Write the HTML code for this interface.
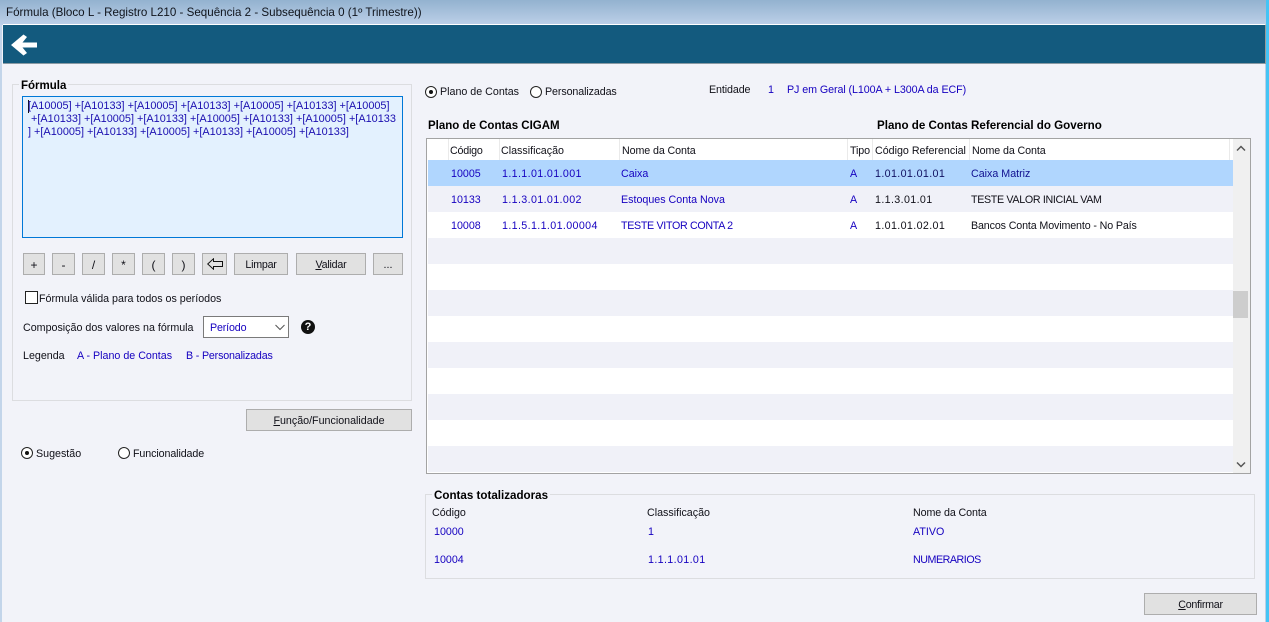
<!DOCTYPE html>
<html lang="pt"><head><meta charset="utf-8"><title>Fórmula</title>
<style>
html,body{margin:0;padding:0;width:1269px;height:622px;overflow:hidden;background:#f2f3f9}
body{position:relative;font:10.7px/14px "Liberation Sans",sans-serif;color:#000}
.a,.t,.b{position:absolute}
.t{white-space:nowrap;color:#101018;margin-top:1px}
.l{color:#1500c0}
.n{letter-spacing:.37px}
.h{font-weight:bold;color:#000;font-size:11.5px}
.b{box-sizing:border-box;background:#e1e1e1;border:1px solid #adadad;text-align:center;line-height:22px;color:#101018}
.r{position:absolute;box-sizing:border-box;width:12px;height:12px;border:1px solid #222;border-radius:50%;background:#fff}
.r.on:after{content:"";position:absolute;left:3px;top:3px;width:4px;height:4px;border-radius:50%;background:#111}
.g{position:absolute;box-sizing:border-box;border:1px solid #dcdde0}
.s{position:absolute;top:139px;width:1px;height:21px;background:#eaeaea}
.row{position:absolute;left:428px;width:805px;height:26px}
</style></head><body>
<div class="a" style="left:0;top:0;width:1269px;height:25px;background:linear-gradient(#93b2cf,#bdd0e9)"></div>
<div class="a" style="left:0;top:25px;width:2px;height:597px;background:#c3d5ea"></div>
<div class="a" style="left:1266px;top:0;width:3px;height:622px;background:#45c4f5"></div>
<div class="a" style="left:1265px;top:25px;width:1px;height:597px;background:#bcd0e6"></div>
<div class="t" style="left:6px;top:5px;color:#10141c;font-size:11.6px">Fórmula (Bloco L - Registro L210 - Sequência 2 - Subsequência 0 (1º Trimestre))</div>
<div class="a" style="left:3px;top:24px;width:1263px;height:40px;box-sizing:border-box;background:#135a7e;border-top:1px solid #fff;border-bottom:1px solid #8a9aa4;border-right:1px solid #999"></div>
<svg class="a" style="left:10px;top:33px" width="28" height="24" viewBox="0 0 28 24"><path d="M27 9.5H12.500L17 4 13.500 1.500 1 12l12.500 10.500 3.500-2.500-4.500-5.500H27z" fill="#fff"/></svg>

<div class="g" style="left:12px;top:84px;width:400px;height:317px"></div>
<div class="t h" style="left:19px;top:78px;background:#f2f3f9;padding:0 2px">Fórmula</div>
<div class="a" style="left:22px;top:96px;width:381px;height:142px;box-sizing:border-box;border:1px solid #0078d7;background:#e3f1fe"></div>
<div class="a" style="left:28px;top:100px;width:1px;height:13px;background:#111"></div>
<div class="t l" style="left:28px;top:99px;line-height:13px;font-size:10.9px;color:#1a0eb0">[A10005] +[A10133] +[A10005] +[A10133] +[A10005] +[A10133] +[A10005]<br>&nbsp;+[A10133] +[A10005] +[A10133] +[A10005] +[A10133] +[A10005] +[A10133<br>] +[A10005] +[A10133] +[A10005] +[A10133] +[A10005] +[A10133]</div>

<div class="b" style="left:23px;top:253px;width:22px;height:22px;font-size:12px">+</div>
<div class="b" style="left:52px;top:253px;width:23px;height:22px;font-size:12px">-</div>
<div class="b" style="left:82px;top:253px;width:23px;height:22px;font-size:12px">/</div>
<div class="b" style="left:112px;top:253px;width:23px;height:22px;font-size:12px">*</div>
<div class="b" style="left:142px;top:253px;width:23px;height:22px;font-size:12px">(</div>
<div class="b" style="left:172px;top:253px;width:23px;height:22px;font-size:12px">)</div>
<div class="b" style="left:202px;top:253px;width:25px;height:22px"><svg style="position:absolute;left:4px;top:4px" width="16" height="12" viewBox="0 0 16 12"><path d="M.7 6 6.500.8v2.700h9v5h-9v2.700z" fill="none" stroke="#111" stroke-width="1"/></svg></div>
<div class="b" style="left:234px;top:253px;width:54px;height:22px;letter-spacing:-.25px">Limpar</div>
<div class="b" style="left:296px;top:253px;width:70px;height:22px;letter-spacing:-.2px"><u>V</u>alidar</div>
<div class="b" style="left:373px;top:253px;width:30px;height:22px">...</div>

<div class="a" style="left:25px;top:291px;width:13px;height:13px;box-sizing:border-box;border:1px solid #222;background:#fff"></div>
<div class="t" style="left:39px;top:291px">Fórmula válida para todos os períodos</div>
<div class="t" style="left:23px;top:320px">Composição dos valores na fórmula</div>
<div class="a" style="left:203px;top:316px;width:86px;height:22px;box-sizing:border-box;border:1px solid #7a7a7a;background:#fff"></div>
<div class="t l" style="left:210px;top:320px;letter-spacing:-.15px">Período</div>
<svg class="a" style="left:275px;top:324px" width="10" height="7"><path d="M.5 1 5 5.500 9.500 1" fill="none" stroke="#555"/></svg>
<div class="a" style="left:301px;top:320px;width:14px;height:14px;border-radius:50%;background:#111;color:#fff;font:bold 11px/14px 'Liberation Sans',sans-serif;text-align:center">?</div>
<div class="t" style="left:23px;top:348px">Legenda</div>
<div class="t l" style="left:77px;top:348px">A - Plano de Contas</div>
<div class="t l" style="left:186px;top:348px;letter-spacing:-.17px">B - Personalizadas</div>

<div class="b" style="left:246px;top:409px;width:166px;height:22px"><u>F</u>unção/Funcionalidade</div>
<div class="r on" style="left:21px;top:447px"></div><div class="t" style="left:36px;top:446px">Sugestão</div>
<div class="r" style="left:118px;top:447px"></div><div class="t" style="left:133px;top:446px;letter-spacing:-.1px">Funcionalidade</div>

<div class="r on" style="left:425px;top:86px"></div><div class="t" style="left:440px;top:84px">Plano de Contas</div>
<div class="r" style="left:530px;top:86px"></div><div class="t" style="left:545px;top:84px;letter-spacing:-.1px">Personalizadas</div>
<div class="t" style="left:709px;top:82px;letter-spacing:-.1px">Entidade</div>
<div class="t l" style="left:768px;top:82px">1</div>
<div class="t l" style="left:787px;top:82px;letter-spacing:-.07px">PJ em Geral (L100A + L300A da ECF)</div>

<div class="t h" style="left:428px;top:118px">Plano de Contas CIGAM</div>
<div class="t h" style="left:877px;top:118px;font-size:11.6px">Plano de Contas Referencial do Governo</div>

<div class="a" style="left:426px;top:138px;width:825px;height:336px;box-sizing:border-box;border:1px solid #a3a3a3;background:#fff"></div>
<div class="row" style="top:160px;background:#b0d6fe"></div>
<div class="row" style="top:186px;background:#f0f1f8"></div>
<div class="row" style="top:238px;background:#f0f1f8"></div>
<div class="row" style="top:290px;background:#f0f1f8"></div>
<div class="row" style="top:342px;background:#f0f1f8"></div>
<div class="row" style="top:394px;background:#f0f1f8"></div>
<div class="row" style="top:446px;height:26px;background:#f0f1f8"></div>
<div class="a" style="left:1233px;top:139px;width:17px;height:334px;background:#f0f0f0"></div>
<div class="a" style="left:1233px;top:291px;width:15px;height:27px;background:#cdcdcd"></div>
<svg class="a" style="left:1236px;top:145px" width="10" height="7"><path d="M1 5.500 5 1.500l4 4" fill="none" stroke="#555" stroke-width="1.500"/></svg>
<svg class="a" style="left:1236px;top:461px" width="10" height="7"><path d="M1 1.500l4 4 4-4" fill="none" stroke="#555" stroke-width="1.500"/></svg>
<div class="s" style="left:448px"></div><div class="s" style="left:499px"></div><div class="s" style="left:619px"></div><div class="s" style="left:847px"></div><div class="s" style="left:872px"></div><div class="s" style="left:969px"></div><div class="s" style="left:1229px"></div>

<div class="t" style="left:450px;top:143px;letter-spacing:-.2px">Código</div>
<div class="t" style="left:501px;top:143px">Classificação</div>
<div class="t" style="left:622px;top:143px;letter-spacing:-.1px">Nome da Conta</div>
<div class="t" style="left:850px;top:143px;letter-spacing:-.1px">Tipo</div>
<div class="t" style="left:875px;top:143px">Código Referencial</div>
<div class="t" style="left:972px;top:143px;letter-spacing:-.1px">Nome da Conta</div>

<div class="t l" style="left:451px;top:166px">10005</div><div class="t l n" style="left:502px;top:166px">1.1.1.01.01.001</div><div class="t l" style="left:621px;top:166px">Caixa</div><div class="t l" style="left:850px;top:166px">A</div><div class="t n" style="left:875px;top:166px;color:#101060">1.01.01.01.01</div><div class="t l" style="left:971px;top:166px;color:#101090">Caixa Matriz</div>
<div class="t l" style="left:451px;top:192px">10133</div><div class="t l n" style="left:502px;top:192px">1.1.3.01.01.002</div><div class="t l" style="left:621px;top:192px">Estoques Conta Nova</div><div class="t l" style="left:850px;top:192px">A</div><div class="t n" style="left:875px;top:192px">1.1.3.01.01</div><div class="t" style="left:971px;top:192px;letter-spacing:-.33px">TESTE VALOR INICIAL VAM</div>
<div class="t l" style="left:451px;top:218px">10008</div><div class="t l n" style="left:502px;top:218px">1.1.5.1.1.01.00004</div><div class="t l" style="left:621px;top:218px;letter-spacing:-.32px">TESTE VITOR CONTA 2</div><div class="t l" style="left:850px;top:218px">A</div><div class="t n" style="left:875px;top:218px">1.01.01.02.01</div><div class="t" style="left:971px;top:218px;letter-spacing:-.13px">Bancos Conta Movimento - No País</div>

<div class="g" style="left:425px;top:494px;width:830px;height:85px"></div>
<div class="t h" style="left:432px;top:488px;background:#f2f3f9;padding:0 2px;font-size:11.6px">Contas totalizadoras</div>
<div class="t" style="left:432px;top:505px">Código</div>
<div class="t" style="left:647px;top:505px">Classificação</div>
<div class="t" style="left:913px;top:505px;letter-spacing:-.1px">Nome da Conta</div>
<div class="t l" style="left:434px;top:524px">10000</div><div class="t l" style="left:648px;top:524px">1</div><div class="t l" style="left:913px;top:524px">ATIVO</div>
<div class="t l" style="left:434px;top:552px">10004</div><div class="t l n" style="left:648px;top:552px">1.1.1.01.01</div><div class="t l" style="left:913px;top:552px;letter-spacing:-.46px">NUMERARIOS</div>

<div class="b" style="left:1144px;top:593px;width:113px;height:22px;letter-spacing:-.27px"><u>C</u>onfirmar</div>
</body></html>
